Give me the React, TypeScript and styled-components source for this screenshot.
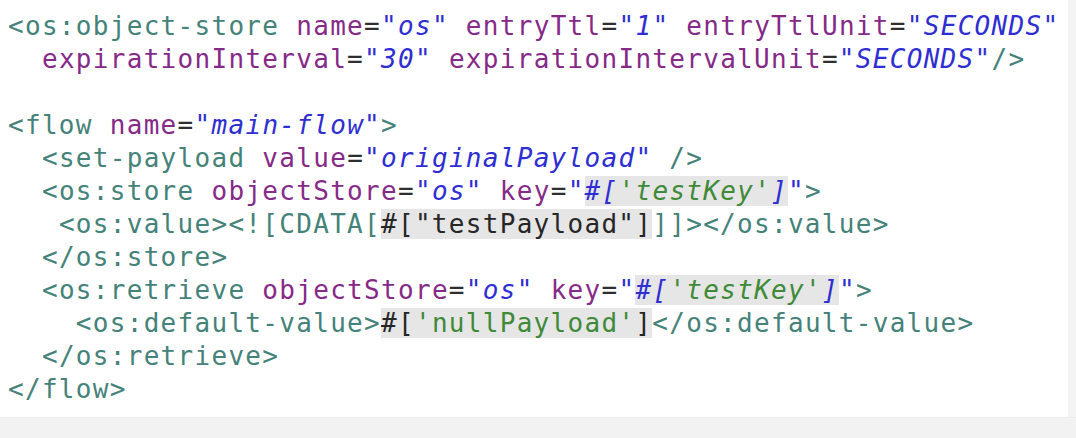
import React from "react";
import styled, { createGlobalStyle, css } from "styled-components";

const GlobalStyle = createGlobalStyle`
  html, body { margin: 0; padding: 0; background: #ffffff; }
  body { font-family: "DejaVu Sans Mono", monospace; }
`;

type Kind = "tag" | "attr" | "eq" | "quote" | "value" | "str" | "strUp" | "expr" | "plain";
type Tok = [Kind, string] | ["hl", Tok[]];

const Page = styled.div`
  width: 1076px;
  height: 438px;
  display: grid;
  grid-template-columns: 1fr 8px;
  grid-template-rows: 417px 1fr;
  background: #ffffff;
  overflow: hidden;
`;

const Editor = styled.div`
  padding: 10px 0 0 8px;
  background: #ffffff;
  overflow: hidden;
`;

const SideStrip = styled.div`
  background: #f4f4f4;
`;

const BottomBand = styled.div`
  grid-column: 1 / span 2;
  background: #f2f2f2;
  border-top: 1px solid #ececec;
`;

const CodeLine = styled.div`
  font-family: "DejaVu Sans Mono", "Liberation Mono", monospace;
  font-size: 26px;
  letter-spacing: 1.3px;
  line-height: 33px;
  height: 33px;
  white-space: pre;
  color: #333333;
`;

const kindStyles: Record<Kind, ReturnType<typeof css>> = {
  tag: css`color: #458279;`,
  attr: css`color: #862a88;`,
  eq: css`color: #2e2e2e;`,
  quote: css`color: #2e2ed2;`,
  value: css`color: #2e2ed2; font-style: italic;`,
  str: css`color: #3f8a38; font-style: italic;`,
  strUp: css`color: #3f8a38;`,
  expr: css`color: #262626;`,
  plain: css`color: #262626;`,
};

const Token = styled.span<{ $kind: Kind }>`
  ${(p) => kindStyles[p.$kind]}
`;

const Highlight = styled.span`
  background: #e6e6e6;
`;

const attr = (name: string, value: string): Tok[] => [
  ["plain", " "],
  ["attr", name],
  ["eq", "="],
  ["quote", '"'],
  ["value", value],
  ["quote", '"'],
];

const keyAttr: Tok[] = [
  ["plain", " "],
  ["attr", "key"],
  ["eq", "="],
  ["quote", '"'],
  ["hl", [["value", "#["], ["str", "'testKey'"], ["value", "]"]]],
  ["quote", '"'],
];

const lines: Tok[][] = [
  [
    ["tag", "<os:object-store"],
    ...attr("name", "os"),
    ...attr("entryTtl", "1"),
    ...attr("entryTtlUnit", "SECONDS"),
  ],
  [
    ["plain", " "],
    ...attr("expirationInterval", "30"),
    ...attr("expirationIntervalUnit", "SECONDS"),
    ["tag", "/>"],
  ],
  [],
  [["tag", "<flow"], ...attr("name", "main-flow"), ["tag", ">"]],
  [
    ["plain", "  "],
    ["tag", "<set-payload"],
    ...attr("value", "originalPayload"),
    ["plain", " "],
    ["tag", "/>"],
  ],
  [
    ["plain", "  "],
    ["tag", "<os:store"],
    ...attr("objectStore", "os"),
    ...keyAttr,
    ["tag", ">"],
  ],
  [
    ["plain", "   "],
    ["tag", "<os:value><![CDATA["],
    ["hl", [["expr", '#["testPayload"]']]],
    ["tag", "]]></os:value>"],
  ],
  [["plain", "  "], ["tag", "</os:store>"]],
  [
    ["plain", "  "],
    ["tag", "<os:retrieve"],
    ...attr("objectStore", "os"),
    ...keyAttr,
    ["tag", ">"],
  ],
  [
    ["plain", "    "],
    ["tag", "<os:default-value>"],
    ["hl", [["expr", "#["], ["strUp", "'nullPayload'"], ["expr", "]"]]],
    ["tag", "</os:default-value>"],
  ],
  [["plain", "  "], ["tag", "</os:retrieve>"]],
  [["tag", "</flow>"]],
];

function renderTokens(toks: Tok[]): React.ReactNode[] {
  return toks.map((t, i) => {
    if (t[0] === "hl") {
      return <Highlight key={i}>{renderTokens(t[1] as Tok[])}</Highlight>;
    }
    return (
      <Token key={i} $kind={t[0] as Kind}>
        {t[1] as string}
      </Token>
    );
  });
}

export default function App() {
  return (
    <>
      <GlobalStyle />
      <Page>
        <Editor>
          {lines.map((l, i) => (
            <CodeLine key={i}>{l.length ? renderTokens(l) : " "}</CodeLine>
          ))}
        </Editor>
        <SideStrip />
        <BottomBand />
      </Page>
    </>
  );
}
